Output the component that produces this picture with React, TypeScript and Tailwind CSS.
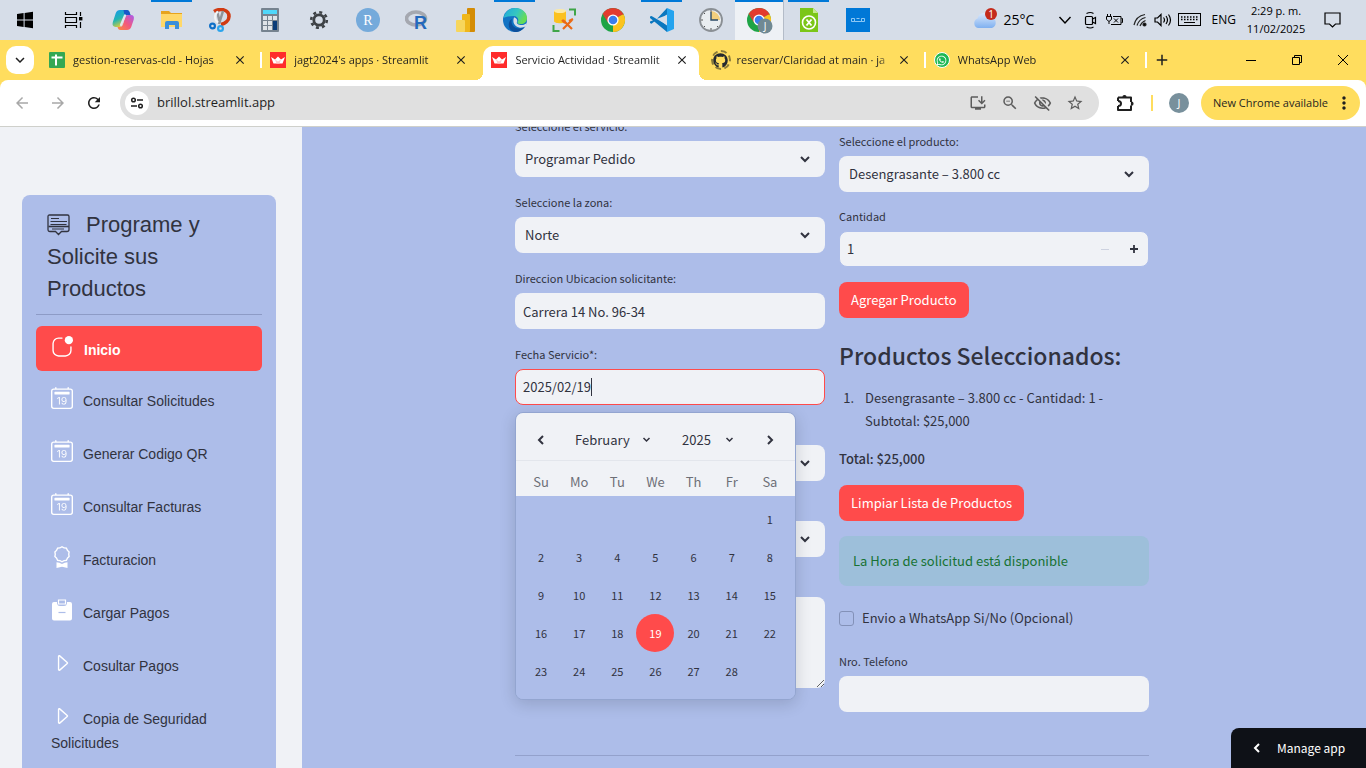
import type { ReactNode } from "react";
import { BsAppIndicator, BsAward, BsCalendar2Date, BsCaretRight } from "react-icons/bs";
import { FaGithub, FaWhatsapp } from "react-icons/fa";
import {
  MdArrowBack, MdArrowForward, MdRefresh, MdOutlineExtension, MdStarBorder,
  MdOutlineVisibilityOff, MdZoomOut, MdOutlineInstallDesktop, MdMoreVert,
  MdClose, MdAdd, MdKeyboardArrowDown,
} from "react-icons/md";

const UI = "font-['Open_Sans','Noto_Sans',sans-serif]";

/* ---------- Taskbar icons ---------- */

const svg = { width: 24, height: 24, viewBox: "0 0 24 24", "aria-hidden": true } as const;

const WindowsLogo = () => (
  <svg {...svg} fill="#000">
    <path d="M4 6 10.600 5V11.500H4zM11.600 4.900 20 3.800V11.500H11.600zM4 12.500H10.600V19L4 18zM11.600 12.500H20V20.200L11.600 19.100z" />
  </svg>
);
const TaskView = () => (
  <svg {...svg} fill="none" stroke="#000">
    <path d="M3.500 4V6.500H14.500V4M3.500 20V17.500H14.500V20M3.500 9.500H14.500V14.500H3.500zM18.500 4V8M18.500 14V20" strokeWidth="1.200" />
    <rect x="17.500" y="9.500" width="2.400" height="2.400" fill="#000" />
  </svg>
);
const Copilot = () => (
  <svg {...svg}>
    <defs>
      <linearGradient id="cpA" x1="0" y1="0" x2="0.5" y2="1"><stop offset="0" stopColor="#1596f0" /><stop offset=".55" stopColor="#24b5b0" /><stop offset="1" stopColor="#f4d02c" /></linearGradient>
      <linearGradient id="cpB" x1="1" y1="0" x2="0" y2="1"><stop offset="0" stopColor="#a75cf0" /><stop offset=".5" stopColor="#f2587f" /><stop offset="1" stopColor="#fb8b3c" /></linearGradient>
    </defs>
    <path d="M9 2h7c1.500 0 2.200 1 2.700 2.600L19.500 7h-2.500c-2 0-3 1-3.600 3l-1.800 6c-.6 2-1.500 3-3.500 3H4.500C2 19 1 17 1.800 14.300L4.800 5C5.500 3 7 2 9 2z" fill="url(#cpA)" />
    <path d="M16 22H9.500c-1.500 0-2.200-.8-2.700-2.200L6.500 19h2c2 0 3-1 3.600-3l1.800-6c.6-2 1.500-3 3.500-3h2.500c2.600 0 3.600 2 2.800 4.700l-2.500 7.300c-.7 2-2.200 3-4.200 3z" fill="url(#cpB)" />
    <path d="M16 2c1.500 0 2.200 1 2.700 2.600L19.500 7H17c-2 0-2.600.6-3.200 2L12.500 2z" fill="#1758c9" />
    <path d="M14 7.500 10 17" stroke="#dfe6f0" strokeWidth="2.200" strokeLinecap="round" />
  </svg>
);
const Folder = () => (
  <svg {...svg}>
    <path d="M1 3h8l2 2h11v14H1z" fill="#e7a41d" />
    <path d="M1 6h21v13H1z" fill="#ffd869" />
    <path d="M5 21v-6q0-2 2-2h10q2 0 2 2v6h-4v-4H9v4z" fill="#3b8fdb" />
  </svg>
);
const Snip = () => (
  <svg {...svg} fill="none">
    <path d="M5 3.500C11 0 20 1 20 8.500c0 4-4 7-8 8" stroke="#d13a12" strokeWidth="3.600" />
    <path d="M8 3l3 12M14 3l-4 13" stroke="#8f9398" strokeWidth="2.500" />
    <path d="M9 3.500c-4 3-4 8 0 11" stroke="#f3f3f3" strokeWidth="2" />
    <circle cx="3.500" cy="18" r="2.400" stroke="#0e6fc7" strokeWidth="2.200" />
    <circle cx="11.500" cy="20.500" r="2.400" stroke="#2ba4ec" strokeWidth="2.200" />
  </svg>
);
const Calculator = () => (
  <svg {...svg}>
    <rect x="3" y="0" width="18" height="24" rx="1" fill="#76838f" />
    <rect x="5" y="2" width="14" height="4" fill="#50d8fa" />
    <path d="M5 8h4v4H5zM10 8h4v4h-4zM15 8h4v4h-4zM5 13h4v4H5zM10 13h4v4h-4zM5 18h4v4H5zM10 18h4v4h-4z" fill="#dfe4e8" />
    <path d="M15 13h4v9h-4z" fill="#0b3d78" />
  </svg>
);
const Gear = () => (
  <svg {...svg} fill="none" stroke="#3e4246">
    <circle cx="12" cy="12" r="5.200" strokeWidth="2.800" />
    <circle cx="12" cy="12" r="7.800" strokeWidth="2.600" strokeDasharray="3 3.126" />
  </svg>
);
const RStudio = () => (
  <svg {...svg}>
    <circle cx="12" cy="12" r="12" fill="#75aadb" />
    <text x="12" y="17" fontSize="14" textAnchor="middle" fill="#fff" fontFamily="Liberation Serif, serif">R</text>
  </svg>
);
const RLang = () => (
  <svg {...svg}>
    <ellipse cx="11" cy="10.500" rx="9.500" ry="6.500" fill="none" stroke="#a5a8b0" strokeWidth="3.600" />
    <text x="9" y="21" fontSize="18" fontWeight="700" fill="#2469bd" fontFamily="Liberation Sans, sans-serif">R</text>
  </svg>
);
const PowerBI = () => (
  <svg {...svg}>
    <rect x="13" y="0" width="8" height="24" rx="1" fill="#d48c05" />
    <rect x="8" y="6" width="8" height="18" rx="1" fill="#efb71c" />
    <rect x="2" y="12" width="9" height="12" rx="1" fill="#f7d65c" />
  </svg>
);
const Edge = () => (
  <svg {...svg}>
    <defs>
      <linearGradient id="edA" x1="0" y1="0" x2="1" y2=".4"><stop offset="0" stopColor="#1fa7dd" /><stop offset=".6" stopColor="#36c7c0" /><stop offset="1" stopColor="#65dc55" /></linearGradient>
    </defs>
    <circle cx="12" cy="12" r="12" fill="#1273c4" />
    <path d="M.5 10C2 3 7 0 12.500 0 19 0 24 4.500 24 10c0 4-3 6-6 6-2.500 0-4-1-3.500-2 2-2 0-6-4-6C6 8 2 9 .5 10z" fill="url(#edA)" />
    <path d="M9 11c-2 5 2 10 8 9.500 2 0 4-1.200 5-2.500-2 4-6 6-10 6C7 23 5 19 6 15c.4-2 1.500-3.200 3-4z" fill="#0d4f9c" />
    <path d="M11 9.500c2 0 4 2.500 3 4.500-.8 1.500 1 3 5 3 1.500 0 3-.5 4.500-2l-.5 3c-2 1.500-5 2-7 1.500-4-.8-7-5-5-10z" fill="#d6dde8" />
  </svg>
);
const DbTools = () => (
  <svg {...svg} fill="none">
    <path d="M17 1.500h6v6M1.500 17v6h6" stroke="#3fa548" strokeWidth="2" />
    <path d="M2 3v10c0 3 12 3 12 0V3z" fill="#fbc11f" />
    <ellipse cx="8" cy="3" rx="6" ry="2" fill="#fde9a0" />
    <path d="M11 12l9 9M20 12l-9 9M17 13l4-2M10 12l3 3" stroke="#ea6a17" strokeWidth="2.200" />
  </svg>
);
const Chrome = ({ badge = false }: { badge?: boolean }) => (
  <svg width={28} height={28} viewBox="0 0 28 28" aria-hidden="true">
    <circle cx="14" cy="14" r="12" fill="#1ea446" />
    <path d="M14 14 3.600 8A12 12 0 0 1 24.400 8z" fill="#e33b2e" />
    <path d="M14 14 24.400 8A12 12 0 0 1 14 26z" fill="#fcc31e" />
    <path d="M14 8.500h10.700L24.400 8H14zM14 14l-5 2.500L3.600 8z" fill="#e33b2e" />
    <circle cx="14" cy="14" r="5.600" fill="#fff" />
    <circle cx="14" cy="14" r="4.300" fill="#3b7ded" />
    {badge && (
      <>
        <circle cx="20" cy="20" r="7.500" fill="#708993" />
        <text x="20" y="24" fontSize="10" textAnchor="middle" fill="#fff" fontFamily="Open Sans, sans-serif">J</text>
      </>
    )}
  </svg>
);
const VSCode = () => (
  <svg {...svg}>
    <path d="M17 0 24 3V21L17 24z" fill="#24a3ee" />
    <path d="M17 0 5 13 1.500 15.800 0 15v-1.500L17 7zM0 8.500 1.500 8 17 17v7L0 10z" fill="#0b77bf" />
    <path d="M17 6.500v11L9.700 12z" fill="#d6dde8" />
  </svg>
);
const ClockIcon = () => (
  <svg {...svg}>
    <circle cx="12" cy="12" r="11" fill="#e9edf0" stroke="#8a8f94" strokeWidth="1.800" />
    <path d="M12 12V3a9 9 0 0 1 9 9z" fill="#f3cf7c" />
    <path d="M12 4v8h7" fill="none" stroke="#2d4b66" strokeWidth="1.400" />
    <path d="M12 2v2M12 20v2M2 12h2M5 5l1 1M5 19l1-1M19 19l-1-1" stroke="#555" />
  </svg>
);
const ExcelLike = () => (
  <svg {...svg}>
    <path d="M3 0h13l5 5v19H3z" fill="#7bc618" />
    <path d="M16 0l5 5h-5z" fill="#c6eb8f" />
    <circle cx="12" cy="14.500" r="6.500" fill="none" stroke="#fff" strokeWidth="1.600" />
    <path d="M9.500 11.500l5 6M14.500 11.500l-5 6" stroke="#fff" strokeWidth="1.800" />
  </svg>
);
const BlueApp = () => (
  <svg {...svg}>
    <rect width="24" height="24" fill="#0078d7" />
    <path d="M5.500 10.500h3v3h-3zM15.500 10.500h3v3h-3zM8.500 13.500h7M10.500 10.500h3" fill="none" stroke="#9cd0f7" strokeWidth=".9" />
  </svg>
);

const TASKS: { name: string; icon: ReactNode; open?: boolean; active?: boolean }[] = [
  { name: "Inicio", icon: <WindowsLogo /> },
  { name: "Vista de tareas", icon: <TaskView /> },
  { name: "Copilot", icon: <Copilot /> },
  { name: "Explorador", icon: <Folder />, open: true },
  { name: "Recortes", icon: <Snip /> },
  { name: "Calculadora", icon: <Calculator /> },
  { name: "Ajustes", icon: <Gear /> },
  { name: "RStudio", icon: <RStudio /> },
  { name: "R", icon: <RLang /> },
  { name: "Power BI", icon: <PowerBI /> },
  { name: "Edge", icon: <Edge />, open: true },
  { name: "SQL", icon: <DbTools /> },
  { name: "Chrome", icon: <Chrome /> },
  { name: "VS Code", icon: <VSCode />, open: true },
  { name: "Reloj", icon: <ClockIcon /> },
  { name: "Chrome J", icon: <Chrome badge />, active: true },
  { name: "Hojas", icon: <ExcelLike />, open: true },
  { name: "Conector", icon: <BlueApp /> },
];

function Taskbar() {
  return (
    <div className={`flex h-10 shrink-0 items-stretch bg-[#d6dde8] text-black ${UI}`}>
      {TASKS.map((t) => (
        <button
          key={t.name}
          aria-label={t.name}
          className={`relative flex w-[49px] items-center justify-center ${t.active ? "border-r border-[#b4bcc8] bg-[#eef1f5]" : ""}`}
        >
          {(t.open || t.active) && (
            <span className={`absolute top-0 h-[2px] bg-[#0078d7] ${t.active ? "inset-x-0" : "inset-x-1"}`} />
          )}
          {t.icon}
        </button>
      ))}
      <div className="ml-auto flex items-center">
        <svg width="28" height="26" viewBox="0 0 28 26" aria-hidden="true">
          <defs><linearGradient id="cl" x1="0" y1="0" x2="0" y2="1"><stop offset="0" stopColor="#dceafd" /><stop offset="1" stopColor="#7fb0f0" /></linearGradient></defs>
          <path d="M6 21a5 5 0 0 1-.5-9.500 7 7 0 0 1 13-2A6 6 0 0 1 20 21z" fill="url(#cl)" />
          <circle cx="19" cy="7" r="6" fill="#c42b1c" />
          <text x="19" y="11" fontSize="10" textAnchor="middle" fill="#fff" fontFamily="Open Sans, sans-serif">1</text>
        </svg>
        <span className="ml-1 w-[54px] text-sm">25°C</span>
        <svg width="14" height="14" viewBox="0 0 14 14" fill="none" stroke="#000" strokeWidth="1.400" aria-hidden="true"><path d="M1.500 4 7 10l5.500-6" /></svg>
        <svg className="ml-3" width="14" height="18" viewBox="0 0 14 18" fill="none" stroke="#000" strokeWidth="1.200" aria-hidden="true">
          <rect x="1.500" y="5.500" width="7" height="8" rx="1" /><path d="M8.500 8 11.500 6.500v6L8.500 11M2.500 2.500q4-2 7 0M2.500 16q4 2 7 0" />
        </svg>
        <svg className="ml-2" width="17" height="14" viewBox="0 0 17 14" fill="none" stroke="#000" aria-hidden="true">
          <path d="M1.500 1v2M4.500 1v2M.5 3.500h5v3l-2 1.500h-1l-2-1.500zM3 8v3M7 3.500h8v8H5M15.500 5.500h1v4h-1M8 5.500l4 4M12 5.500l-4 4" />
        </svg>
        <svg className="ml-2.5" width="15" height="14" viewBox="0 0 15 14" fill="none" stroke="#222" strokeWidth="1.200" aria-hidden="true">
          <path d="M1 12Q3 3 12 1.500M4 12.500Q6 6 12.500 4.500M7 13Q8.500 9 12.500 7.500" /><circle cx="11.500" cy="11.500" r="1.500" fill="#000" />
        </svg>
        <svg className="ml-1.5" width="18" height="14" viewBox="0 0 18 14" fill="none" stroke="#000" strokeWidth="1.200" aria-hidden="true">
          <path d="M1 5h2.500L7 1.500v11L3.500 9H1zM9.500 4.500q2 2.500 0 5M12 3q3 4 0 8M14.500 1.500q4 5.500 0 11" />
        </svg>
        <svg className="ml-1.5" width="24" height="14" viewBox="0 0 24 14" fill="none" stroke="#000" aria-hidden="true">
          <rect x=".5" y=".5" width="22" height="12" /><path d="M3 4h17M3 6.500h17" strokeDasharray="1.500 1.500" strokeWidth="1.300" /><path d="M6 9.500h11" />
        </svg>
        <span className="ml-2.5 text-xs">ENG</span>
        <span className="mx-2 flex w-16 flex-col items-center text-[11px] leading-[18px]">
          <span>2:29 p. m.</span>
          <span>11/02/2025</span>
        </span>
        <svg className="mr-6 ml-2" width="18" height="18" viewBox="0 0 18 18" fill="none" stroke="#000" strokeWidth="1.200" aria-hidden="true"><path d="M1 2h15v11h-4.500l-3 3-3-3H1z" /></svg>
      </div>
    </div>
  );
}

/* ---------- Browser ---------- */

const Sheets = () => (
  <svg width="16" height="16" viewBox="0 0 16 16" aria-hidden="true"><rect width="16" height="16" rx="1" fill="#34a853" /><path d="M2.500 5.500h11M7 2.500v11" stroke="#fff" strokeWidth="2" /></svg>
);
const Crown = () => (
  <svg width="16" height="16" viewBox="0 0 16 16" aria-hidden="true"><rect width="16" height="16" fill="#ff2b2b" /><path d="M1 5l4 2.500 3-3 3 3L15 5l-2.500 6.500h-9z" fill="#fff" /><path d="M5 7.500l1.500 4h3l1.500-4-3 2z" fill="#ffc9c9" /></svg>
);
const Github = () => (
  <span className="flex size-5 shrink-0 items-center justify-center rounded-full border-2 border-dashed border-[#8a7a3a]"><FaGithub size={15} color="#24292f" /></span>
);
const Wa = () => (
  <span className="flex size-4 shrink-0 items-center justify-center rounded-full border border-white bg-[#1fb855] text-white"><FaWhatsapp size={11} /></span>
);

const TABS = [
  { title: "gestion-reservas-cld - Hojas", icon: <Sheets />, sep: true },
  { title: "jagt2024's apps · Streamlit", icon: <Crown /> },
  { title: "Servicio Actividad · Streamlit", icon: <Crown />, active: true },
  { title: "reservar/Claridad at main · ja", icon: <Github />, sep: true },
  { title: "WhatsApp Web", icon: <Wa />, sep: true },
];

function TabStrip() {
  return (
    <div className={`flex h-10 shrink-0 items-end bg-[#ffdd5e] text-[#1f1f1f] ${UI}`}>
      <button aria-label="Buscar pestañas" className="mb-[6px] ml-[6px] flex size-7 items-center justify-center rounded-[10px] bg-white">
        <MdKeyboardArrowDown size={18} />
      </button>
      <div className="ml-[7px] flex w-[1106px]">
        {TABS.map((t) => (
          <div key={t.title} className="relative flex h-[34px] min-w-0 flex-1 items-center pb-[6px] pl-2">
            {t.active && (
              <>
                <span className="absolute inset-y-0 right-[6px] left-0 rounded-t-[10px] bg-white" />
                <span className="absolute bottom-0 -left-2 size-2 bg-[radial-gradient(circle_at_0_0,transparent_8px,#fff_8px)]" />
                <span className="absolute right-[-2px] bottom-0 size-2 bg-[radial-gradient(circle_at_100%_0,transparent_8px,#fff_8px)]" />
              </>
            )}
            <div className="relative flex w-4 justify-center">{t.icon}</div>
            <span className="relative ml-2 w-[154px] mask-[linear-gradient(90deg,#000_92%,transparent)] text-[11px] leading-5 whitespace-nowrap">{t.title}</span>
            <button aria-label="Cerrar pestaña" className="relative ml-1.5"><MdClose size={14} /></button>
            {t.sep && <span className="absolute right-0 bottom-3 h-4 w-[2px] bg-white" />}
          </div>
        ))}
      </div>
      <button aria-label="Nueva pestaña" className="mb-[11px] ml-1.5"><MdAdd size={18} /></button>
      <div className="mb-3.5 ml-auto flex gap-[34px] pr-[17px]">
        <button aria-label="Minimizar"><svg width="12" height="12" viewBox="0 0 12 12" stroke="#000"><path d="M1 6.500h10" /></svg></button>
        <button aria-label="Restaurar"><svg width="12" height="12" viewBox="0 0 12 12" fill="none" stroke="#000"><path d="M1.500 3.500h7v7h-7zM3.500 3V1.500h7v7H9" /></svg></button>
        <button aria-label="Cerrar"><svg width="12" height="12" viewBox="0 0 12 12" stroke="#000"><path d="M1 1l10 10M11 1 1 11" /></svg></button>
      </div>
    </div>
  );
}

function Toolbar() {
  return (
    <div className="shrink-0 bg-[#ffdd5e]">
      <div className={`flex h-[47px] items-center rounded-t-lg border-b border-[#cfd0cb] bg-white pr-[6px] pl-[13px] ${UI}`}>
        <button aria-label="Atrás" className="text-[#a8a8a8]"><MdArrowBack size={18} /></button>
        <button aria-label="Adelante" className="ml-[18px] text-[#a8a8a8]"><MdArrowForward size={18} /></button>
        <button aria-label="Recargar" className="ml-[18px] text-[#1f1f1f]"><MdRefresh size={18} /></button>
        <div className="ml-[17px] flex h-[34px] flex-1 items-center rounded-full bg-[#e0e0e0] pr-[15px] pl-[5px]">
          <span className="flex size-6 items-center justify-center rounded-full bg-white">
            <svg width="14" height="14" viewBox="0 0 14 14" fill="none" stroke="#1f1f1f" strokeWidth="1.500" aria-hidden="true"><circle cx="3.500" cy="4" r="1.800" /><path d="M7 4h6M1 10h6" /><circle cx="10.500" cy="10" r="1.800" /></svg>
          </span>
          <input aria-label="Dirección" readOnly value="brillol.streamlit.app" className="ml-2 min-w-0 flex-1 bg-transparent text-[13px] text-[#1f1f1f] outline-none" />
          <div className="flex items-center gap-3.5 text-[#5c5c5c]">
            <MdOutlineInstallDesktop size={18} /><MdZoomOut size={18} /><MdOutlineVisibilityOff size={19} /><MdStarBorder size={18} />
          </div>
        </div>
        <button aria-label="Extensiones" className="ml-4 text-[#1f1f1f]">
          <svg width="20" height="20" viewBox="0 0 20 20" fill="none" stroke="#1f1f1f" strokeWidth="2" strokeLinejoin="round" aria-hidden="true">
            <path d="M3 4.500h13V9M16 12.500V17H3v-4M3 4.500V8" />
            <path d="M3 8q3 0 3 2.500T3 13" />
            <path d="M8 4a1.500 1.500 0 0 1 3 0zM16.500 9.200a1.500 1.500 0 0 1 0 3z" fill="#1f1f1f" strokeWidth="1.200" />
          </svg>
        </button>
        <span className="ml-4 h-4 w-[2px] bg-[#ffdd5e]" />
        <span className="ml-4 flex size-5 items-center justify-center rounded-full bg-[#78909c] text-[11px] text-white">J</span>
        <button className="ml-3 flex h-[34px] w-[159px] items-center justify-between rounded-full bg-[#ffdd5e] pr-1.5 pl-3 text-[11px] whitespace-nowrap text-[#1f1f1f]">
          New Chrome available <MdMoreVert size={20} />
        </button>
      </div>
    </div>
  );
}

/* ---------- Sidebar ---------- */

function ClipboardIcon({ className = "" }: { size?: number; className?: string }) {
  return (
    <svg className={className} width="22" height="22" viewBox="0 0 22 22" aria-hidden="true">
      <path d="M3 3h3v1.500Q6.500 7 9 7h4q2.500 0 3-2.500V3h3q2 0 2 2v14.500q0 2-2 2H3q-2 0-2-2V5q0-2 2-2z" fill="#fff" />
      <path d="M7.500 1h7v4h-7z" fill="none" stroke="#fff" strokeWidth="1.200" />
      <path d="M7.500 13.500h7" stroke="#adbde9" strokeWidth="1.200" />
    </svg>
  );
}

const MENU = [
  { label: "Consultar Solicitudes", Icon: BsCalendar2Date },
  { label: "Generar Codigo QR", Icon: BsCalendar2Date },
  { label: "Consultar Facturas", Icon: BsCalendar2Date },
  { label: "Facturacion", Icon: BsAward },
  { label: "Cargar Pagos", Icon: ClipboardIcon },
  { label: "Cosultar Pagos", Icon: BsCaretRight },
  { label: "Copia de Seguridad Solicitudes", Icon: BsCaretRight },
];

function Sidebar() {
  return (
    <aside className="w-[302px] shrink-0 bg-[#f0f2f6] pt-[68px] pr-[26px] pl-[22px]">
      <nav className="min-h-full rounded-t-lg bg-[#adbde9] px-3.5 pt-3.5 font-['Liberation_Sans',Arial,sans-serif] text-[#31333f]">
        <h2 className="mr-10 ml-[11px] text-[22px] leading-8">
          <svg className="mr-4 inline-block align-[-4px]" width="23" height="22" viewBox="0 0 23 22" fill="none" stroke="#31333f" aria-hidden="true">
            <path d="M2.500 1h18Q22 1 22 2.500v13Q22 17.500 20 17.500h-5.500L11.500 20.500 8.500 17.500H3Q1 17.500 1 15.500v-13Q1 1 2.500 1z" strokeWidth="1.300" />
            <path d="M4 4.500h8M3.500 7.500H20M3.500 10.500h16M5 15h12" />
            <path d="M1.500 12.500h20.500" strokeWidth="1.600" />
          </svg>
          Programe y Solicite sus Productos
        </h2>
        <hr className="mt-[9px] border-[#8d9bc6]" />
        <ul className="mt-[11px] flex flex-col gap-2 text-sm leading-6">
          <li>
            <a href="#inicio" className="block h-[45px] rounded-md bg-[#ff4b4b] pt-2.5 pl-[15px] text-white">
              <BsAppIndicator size={22} className="mr-[11px] inline-block align-[-3px]" />
              <span className="font-black">Inicio</span>
            </a>
          </li>
          {MENU.map(({ label, Icon }) => (
            <li key={label}>
              <a href="#menu" className="block min-h-[45px] pt-2 pr-8 pl-[15px]">
                <Icon size={22} className="mr-2.5 inline-block align-[-3px] text-white" />
                {label}
              </a>
            </li>
          ))}
        </ul>
      </nav>
    </aside>
  );
}

/* ---------- Form ---------- */

const BOX = "h-9 w-full rounded-lg bg-[#f0f2f6] text-[13px] text-[#31333f] outline-none";

function Field({ id, label, children }: { id: string; label: string; children: ReactNode }) {
  return (
    <div className="relative">
      <label htmlFor={id} className="block h-6 text-[11px] leading-[18px]">{label}</label>
      {children}
    </div>
  );
}

function SelectBox({ id, label, value }: { id: string; label: string; value: string }) {
  return (
    <Field id={id} label={label}>
      <div className="relative">
        <select id={id} className={`${BOX} appearance-none pr-8 pl-2.5`}>
          <option>{value}</option>
        </select>
        <Chevron className="pointer-events-none absolute top-3 right-3.5" />
      </div>
    </Field>
  );
}

function Chevron({ className = "", size = 12, turn = 0 }: { className?: string; size?: number; turn?: number }) {
  return (
    <svg className={className} width={size} height={size} viewBox="0 0 12 12" fill="none" stroke="currentColor" strokeWidth="2" aria-hidden="true">
      <path d="M2 4l4 4 4-4" transform={`rotate(${turn} 6 6)`} />
    </svg>
  );
}

const WEEKS = [
  ["", "", "", "", "", "", 1],
  [2, 3, 4, 5, 6, 7, 8],
  [9, 10, 11, 12, 13, 14, 15],
  [16, 17, 18, 19, 20, 21, 22],
  [23, 24, 25, 26, 27, 28, ""],
];

function Calendar() {
  return (
    <div className="absolute top-full left-0 z-10 mt-[7px] w-[281px] overflow-hidden rounded-lg border border-[#93a5d0] bg-[#adbde9] shadow-[0_4px_16px_rgba(14,17,23,0.16)]">
      <div className="flex h-12 items-center border-b border-[#e3e6ec] bg-[#f0f2f6] px-[19px] pt-1.5 text-[13px]">
        <button aria-label="Mes anterior"><Chevron turn={90} /></button>
        <span className="relative ml-7 flex items-center">
          <select aria-label="Mes" className="w-[78px] appearance-none bg-transparent outline-none"><option>February</option></select>
          <Chevron size={9} className="pointer-events-none absolute right-0.5" />
        </span>
        <span className="relative ml-[29px] flex items-center">
          <select aria-label="Año" className="w-[54px] appearance-none bg-transparent outline-none"><option>2025</option></select>
          <Chevron size={9} className="pointer-events-none absolute right-0.5" />
        </span>
        <button aria-label="Mes siguiente" className="ml-auto"><Chevron turn={-90} /></button>
      </div>
      <div className="bg-[linear-gradient(#f0f2f6_35px,#adbde9_35px)] px-[6px] pb-[9px]">
        <table className="w-full table-fixed border-collapse text-center">
          <thead>
            <tr>
              {["Su", "Mo", "Tu", "We", "Th", "Fr", "Sa"].map((d) => (
                <th key={d} className="h-[39px] p-0 pt-0.5 text-[13px] leading-5 font-normal text-[#6d6f76]">{d}</th>
              ))}
            </tr>
          </thead>
          <tbody>
            {WEEKS.map((w, i) => (
              <tr key={i}>
                {w.map((d, j) => (
                  <td key={j} className="h-[38px] p-0 text-[11px]">
                    {d !== "" && (
                      <button className={d === 19 ? "block size-[38px] rounded-full bg-[#ff4b4b] text-white" : "block size-[38px]"}>{d}</button>
                    )}
                  </td>
                ))}
              </tr>
            ))}
          </tbody>
        </table>
      </div>
    </div>
  );
}

function LeftColumn() {
  return (
    <div className="-mt-[10px] flex flex-col gap-4">
      <SelectBox id="servicio" label="Seleccione el servicio:" value="Programar Pedido" />
      <SelectBox id="zona" label="Seleccione la zona:" value="Norte" />
      <Field id="dir" label="Direccion Ubicacion solicitante:">
        <input id="dir" defaultValue="Carrera 14 No. 96-34" className={`${BOX} block px-2`} />
      </Field>
      <Field id="fecha" label="Fecha Servicio*:">
        <div className={`${BOX} flex items-center border border-[#ff4b4b] pl-[7px]`}>
          <input id="fecha" defaultValue="2025/02/19" className="field-sizing-content bg-transparent outline-none" />
          <span className="h-[18px] w-px bg-[#31333f]" />
        </div>
        <Calendar />
      </Field>
      <SelectBox id="hora" label="" value="" />
      <SelectBox id="encargado" label="" value="" />
      <Field id="notas" label="">
        <textarea id="notas" className="block h-[91px] w-full rounded-lg bg-[#f0f2f6] outline-none" />
      </Field>
    </div>
  );
}

function RightColumn() {
  const red = "h-9 self-start rounded-lg bg-[#ff4b4b] px-3 text-[13px] text-white";
  return (
    <div className="flex flex-col gap-[15px] pt-[5px]">
      <SelectBox id="producto" label="Seleccione el producto:" value="Desengrasante – 3.800 cc" />
      <Field id="cantidad" label="Cantidad">
        <div className={`${BOX} flex items-center border border-[#adbde9]`}>
          <input id="cantidad" inputMode="numeric" defaultValue="1" className="min-w-0 flex-1 bg-transparent pl-[7px] outline-none" />
          <button aria-label="Restar" className="flex w-[29px] justify-center"><span className="h-px w-2 bg-[#cdd2e0]" /></button>
          <button aria-label="Sumar" className="flex w-[29px] justify-center">
            <svg width="8" height="8" viewBox="0 0 8 8" stroke="#31333f" strokeWidth="1.800"><path d="M0 4h8M4 0v8" /></svg>
          </button>
        </div>
      </Field>
      <button className={red}>Agregar Producto</button>
      <h3 className="mt-1.5 text-[23px] leading-8 font-medium">Productos Seleccionados:</h3>
      <ol className="list-decimal pr-8 pl-[18px] text-[13px] leading-[23px]">
        <li className="pl-2">Desengrasante – 3.800 cc - Cantidad: 1 - Subtotal: $25,000</li>
      </ol>
      <p className="text-[13px] leading-[23px] font-medium">Total: $25,000</p>
      <button className={red}>Limpiar Lista de Productos</button>
      <div role="status" className="flex h-[50px] items-center rounded-lg bg-[#9dbfda] px-3.5 text-[13px] text-[#177233]">La Hora de solicitud está disponible</div>
      <div className="mt-1.5 flex h-[22px] items-center gap-2">
        <input id="wa" type="checkbox" className="size-[15px] appearance-none rounded-[3px] border border-[#8391b8]" />
        <label htmlFor="wa" className="text-[13px]">Envio a WhatsApp Si/No (Opcional)</label>
      </div>
      <div className="mt-2">
        <Field id="tel" label="Nro. Telefono">
          <input id="tel" className={`${BOX} block px-2`} />
        </Field>
      </div>
    </div>
  );
}

export default function App() {
  return (
    <div className="flex h-screen flex-col overflow-hidden">
      <Taskbar />
      <TabStrip />
      <Toolbar />
      <div className="relative flex min-h-0 flex-1 overflow-hidden">
        <Sidebar />
        <main className="flex-1 overflow-hidden bg-[#adbde9] pr-1 font-['Noto_Sans_CJK_SC',sans-serif] text-[#31333f]">
          <div className="mx-auto max-w-[634px]">
            <div className="grid grid-cols-2 gap-3.5">
              <LeftColumn />
              <RightColumn />
            </div>
            <hr className="mt-[43px] border-[#93a1cc]" />
          </div>
        </main>
        <button className="absolute right-0 bottom-0 flex h-10 w-[135px] items-center gap-3.5 rounded-tl-lg bg-[#0e1117] pl-5 font-['Noto_Sans_CJK_SC',sans-serif] text-xs text-white">
          <Chevron turn={90} />
          Manage app
        </button>
      </div>
    </div>
  );
}
